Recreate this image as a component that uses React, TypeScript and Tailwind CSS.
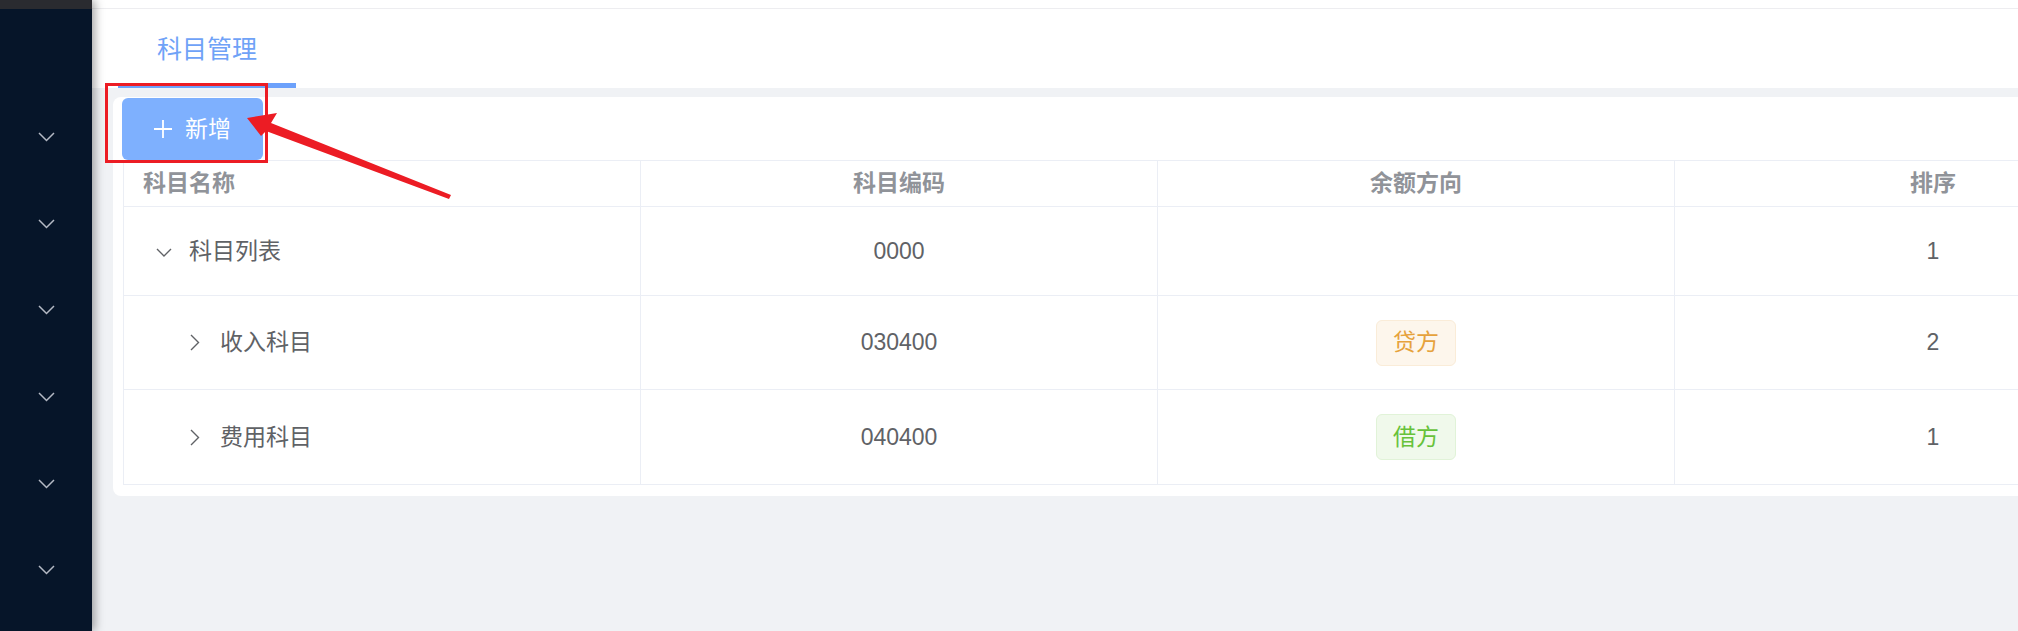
import React from 'react'

interface Row {
  name: string
  code: string
  direction?: 'credit' | 'debit'
  sort: number
  level: number
  height: string
}

const ROWS: Row[] = [
  { name: '科目列表', code: '0000', sort: 1, level: 0, height: 'h-[89px]' },
  { name: '收入科目', code: '030400', direction: 'credit', sort: 2, level: 1, height: 'h-[94px]' },
  { name: '费用科目', code: '040400', direction: 'debit', sort: 1, level: 1, height: 'h-[94px]' },
]

function Chevron({ className = '', color = '#606266' }: { className?: string; color?: string }) {
  return (
    <svg width="17" height="10" viewBox="0 0 17 10" className={className} fill="none">
      <polyline points="1,1 8.5,8.5 16,1" stroke={color} strokeWidth="1.5" />
    </svg>
  )
}

function DirectionTag({ kind }: { kind: 'credit' | 'debit' }) {
  const credit = kind === 'credit'
  return (
    <span
      className={
        credit
          ? 'inline-flex h-[46px] w-[80px] items-center justify-center rounded-md border border-[#faecd8] bg-[#fdf6ec] text-[#e6a23c]'
          : 'inline-flex h-[46px] w-[80px] items-center justify-center rounded-md border border-[#e1f3d8] bg-[#f0f9eb] text-[#67c23a]'
      }
    >
      {credit ? '贷方' : '借方'}
    </span>
  )
}

export default function App() {
  return (
    <div className="relative flex h-[631px] w-[2018px] overflow-hidden bg-[#f0f2f5] font-['Liberation_Sans','Noto_Sans_CJK_SC',sans-serif] leading-none">
      {/* Sidebar */}
      <aside className="relative z-10 flex w-[92px] flex-shrink-0 flex-col bg-[#061529] shadow-[3px_0_9px_rgba(0,0,0,0.35)]">
        <div className="h-[9px] bg-[#2a2b30]" />
        <div className="flex flex-col pt-[85px]">
          {[0, 1, 2, 3, 4, 5].map((i) => (
            <div key={i} className="flex h-[86.6px] items-center justify-center">
              <Chevron color="#b4b9c4" />
            </div>
          ))}
        </div>
      </aside>

      {/* Main */}
      <main className="flex min-w-0 flex-1 flex-col">
        <div className="h-[9px] border-b border-[#ededf0] bg-white" />
        <div className="flex h-[79px] bg-white">
          <div className="ml-[26px] flex w-[178px] flex-col">
            <div className="flex flex-1 items-center justify-center pt-[6px] text-[25px] text-[#6fa2f7]">
              科目管理
            </div>
            <div className="h-[5px] bg-[#6ca1fb]" />
          </div>
        </div>

        <div className="ml-[21px] mt-[9px] w-[2100px] rounded-lg bg-white pb-[11px] pl-[9px] pt-[1px]">
          <button className="flex h-[62px] w-[141px] items-center justify-center gap-[13px] rounded-md bg-[#7eb0fe] text-[23px] text-white">
            <svg width="18" height="18" viewBox="0 0 18 18">
              <path d="M9 0v18M0 9h18" stroke="#fff" strokeWidth="1.8" />
            </svg>
            <span>新增</span>
          </button>

          <div className="ml-px w-[2069px] border-b border-l border-t border-[#ebeef5] text-[23px]">
            {/* Header */}
            <div className="grid h-[46px] grid-cols-[517px_517px_517px_517px] font-bold text-[#909399]">
              <div className="flex items-center border-b border-r border-[#ebeef5] pl-[19px]">科目名称</div>
              <div className="flex items-center justify-center border-b border-r border-[#ebeef5]">科目编码</div>
              <div className="flex items-center justify-center border-b border-r border-[#ebeef5]">余额方向</div>
              <div className="flex items-center justify-center border-b border-r border-[#ebeef5]">排序</div>
            </div>

            {ROWS.map((row, idx) => {
              const last = idx === ROWS.length - 1
              const cell = last
                ? 'flex items-center border-r border-[#ebeef5]'
                : 'flex items-center border-b border-r border-[#ebeef5]'
              return (
                <div
                  key={row.name}
                  className={`grid grid-cols-[517px_517px_517px_517px] text-[#606266] ${row.height}`}
                >
                  <div className={cell}>
                    {row.level === 0 ? (
                      <div className="flex items-center pl-[32px]">
                        <svg width="16" height="9" viewBox="0 0 16 9" className="mt-[2px]" fill="none">
                          <polyline points="1,1 8,8 15,1" stroke="#606266" strokeWidth="1.4" />
                        </svg>
                        <span className="ml-[17px]">{row.name}</span>
                      </div>
                    ) : (
                      <div className="flex items-center pl-[66px]">
                        <svg width="10" height="17" viewBox="0 0 10 17" fill="none">
                          <polyline points="1,1 8.5,8.5 1,16" stroke="#606266" strokeWidth="1.4" />
                        </svg>
                        <span className="ml-[20px]">{row.name}</span>
                      </div>
                    )}
                  </div>
                  <div className={`${cell} justify-center`}>{row.code}</div>
                  <div className={`${cell} justify-center`}>
                    {row.direction && <DirectionTag kind={row.direction} />}
                  </div>
                  <div className={`${cell} justify-center`}>{row.sort}</div>
                </div>
              )
            })}
          </div>
        </div>
      </main>

      {/* Annotation overlay */}
      <svg className="pointer-events-none absolute left-0 top-0 z-20" width="2018" height="631">
        <rect x="106.5" y="84.5" width="160" height="77" fill="none" stroke="#ec1c24" strokeWidth="3" />
        <polygon
          points="247,118 277,113 271,123 451,195 449,199 266,131 261,136"
          fill="#ec1c24"
        />
      </svg>
    </div>
  )
}
